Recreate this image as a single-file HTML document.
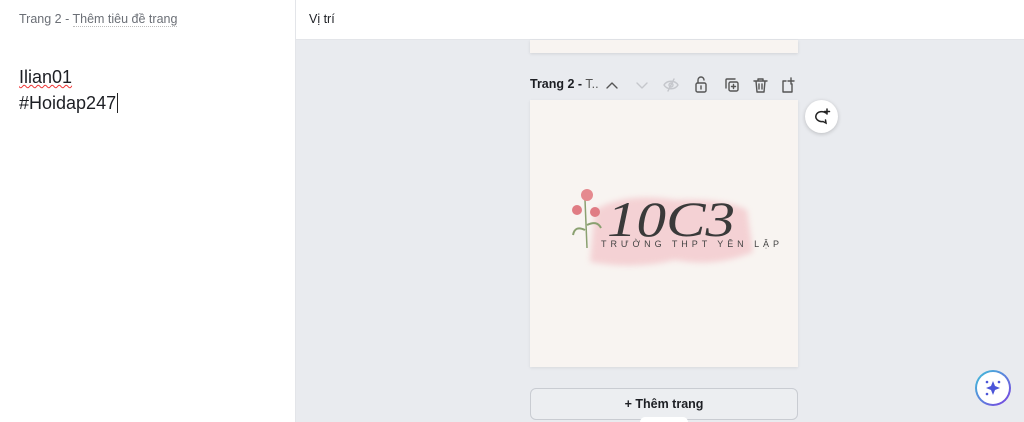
<!DOCTYPE html>
<html><head><meta charset="utf-8"><style>
*{margin:0;padding:0;box-sizing:border-box}
html,body{width:1024px;height:422px;overflow:hidden}
body{font-family:"Liberation Sans",sans-serif;background:#e9ebef;position:relative}
.hdr{position:absolute;left:0;top:0;width:1024px;height:40px;background:#fff;border-bottom:1px solid #e3e5e9}
.left{position:absolute;left:0;top:0;width:296px;height:422px;background:#fff;border-right:1px solid #e3e5e9}
.abs{position:absolute}
</style></head><body>
<div class="hdr"></div>
<div class="left"></div>
<div class="abs" style="left:19px;top:12px;font-size:12.5px;color:#6b6f76">Trang 2 - <span style="border-bottom:1px dotted #bbb">Thêm tiêu đề trang</span></div>
<div class="abs" style="left:309px;top:12px;font-size:12.5px;color:#1d1f24">Vị trí</div>
<div class="abs" style="left:19px;top:64px;font-size:18px;line-height:26px;color:#1d1f24">
<span style="text-decoration:underline wavy #e33;text-decoration-thickness:1px">Ilian01</span><br>#Hoidap247<span style="border-left:1px solid #222;margin-left:1px"></span></div>
<div class="abs" style="left:530px;top:40px;width:268px;height:13px;background:#f8f4f1;box-shadow:0 1px 3px rgba(0,0,0,.1)"></div>
<div class="abs" style="left:530px;top:77px;font-size:12.5px;color:#1d1f24"><b style="font-weight:600">Trang 2 -</b> <span style="color:#555">T..</span></div>
<svg class="abs" style="left:600px;top:74px" width="200" height="22" fill="none" stroke="#555" stroke-width="1.4" stroke-linecap="round" stroke-linejoin="round">
<path d="M7 14l5-5 5 5"/>
<path d="M37 9l5 5 5-5" stroke="#c5c7cc"/>
<g stroke="#c5c7cc"><path d="M64 11c3-5 11-5 14 0c-3 5-11 5-14 0z"/><circle cx="71" cy="11" r="2"/><path d="M74 5l-6 12"/></g>
<rect x="96" y="9" width="10" height="9" rx="1.5"/><path d="M98 9V6a3 3 0 0 1 6 0"/><path d="M101 12v3"/>
<rect x="129" y="8" width="9" height="9" rx="1.5"/><path d="M126 14V6a1 1 0 0 1 1-1h8"/><path d="M133.5 10.5v4M131.5 12.5h4"/>
<path d="M154 7h13M158 7V5h5v2M156 7l1 11h7l1-11M159 10v5M162 10v5"/>
<path d="M192 10v8h-9V7h3M191 4v6M188 7h6"/>
</svg>
<div class="abs" style="left:530px;top:100px;width:268px;height:267px;background:#f8f4f1;box-shadow:0 1px 3px rgba(0,0,0,.08)"></div>
<svg class="abs" style="left:565px;top:180px" width="220" height="95">
<defs><filter id="b"><feGaussianBlur stdDeviation="3"/></filter></defs>
<path d="M30 30 Q60 12 110 20 Q160 18 182 30 L188 72 Q150 88 110 80 Q70 90 25 82 Z" fill="#f3c3c8" opacity=".7" filter="url(#b)"/>
<path d="M22 68 L20 20" stroke="#8aa070" stroke-width="1.5"/>
<circle cx="22" cy="15" r="6" fill="#e58a8f"/><circle cx="12" cy="30" r="5" fill="#e07c84"/><circle cx="30" cy="32" r="5" fill="#e07c84"/>
<path d="M20 50 Q10 45 8 55 M22 45 Q32 40 36 48" stroke="#8aa070" stroke-width="2" fill="none"/>
<text x="42" y="56" font-family="Liberation Serif,serif" font-style="italic" font-size="50" fill="#3a3a3a" textLength="128" lengthAdjust="spacingAndGlyphs">10C3</text>
<text x="36" y="67" font-family="Liberation Sans,sans-serif" font-size="9" fill="#444" textLength="178" lengthAdjust="spacing">TRƯỜNG THPT YÊN LẬP</text>
</svg>
<div class="abs" style="left:805px;top:100px;width:33px;height:33px;border-radius:50%;background:#fff;box-shadow:0 1px 4px rgba(0,0,0,.2)"></div>
<svg class="abs" style="left:805px;top:100px" width="33" height="33" fill="none" stroke="#222" stroke-width="1.5" stroke-linecap="round"><path d="M21 13a6 5 0 1 0-3 8.5l3 1.5-.5-3"/><path d="M22 9v5M19.5 11.5h5"/></svg>
<div class="abs" style="left:530px;top:388px;width:268px;height:32px;border:1px solid #c9ccd2;border-radius:6px;background:#eceef1;font-size:12.5px;font-weight:bold;color:#1d1f24;text-align:center;line-height:30px">+ Thêm trang</div>
<div class="abs" style="left:975px;top:370px;width:36px;height:36px;border-radius:50%;background:linear-gradient(135deg,#3ec5d9,#7a3de0);padding:2px"><div style="width:32px;height:32px;border-radius:50%;background:#fff"></div></div>
<svg class="abs" style="left:975px;top:370px" width="36" height="36" fill="#4b55d8"><path d="M18 11l2 5 5 2-5 2-2 5-2-5-5-2 5-2z"/><circle cx="12" cy="12" r="1.3"/><circle cx="24" cy="12" r="1.3"/><circle cx="12" cy="24" r="1.3"/></svg>
<div class="abs" style="left:640px;top:417px;width:48px;height:10px;border-radius:8px;background:#fff"></div>
</body></html>
